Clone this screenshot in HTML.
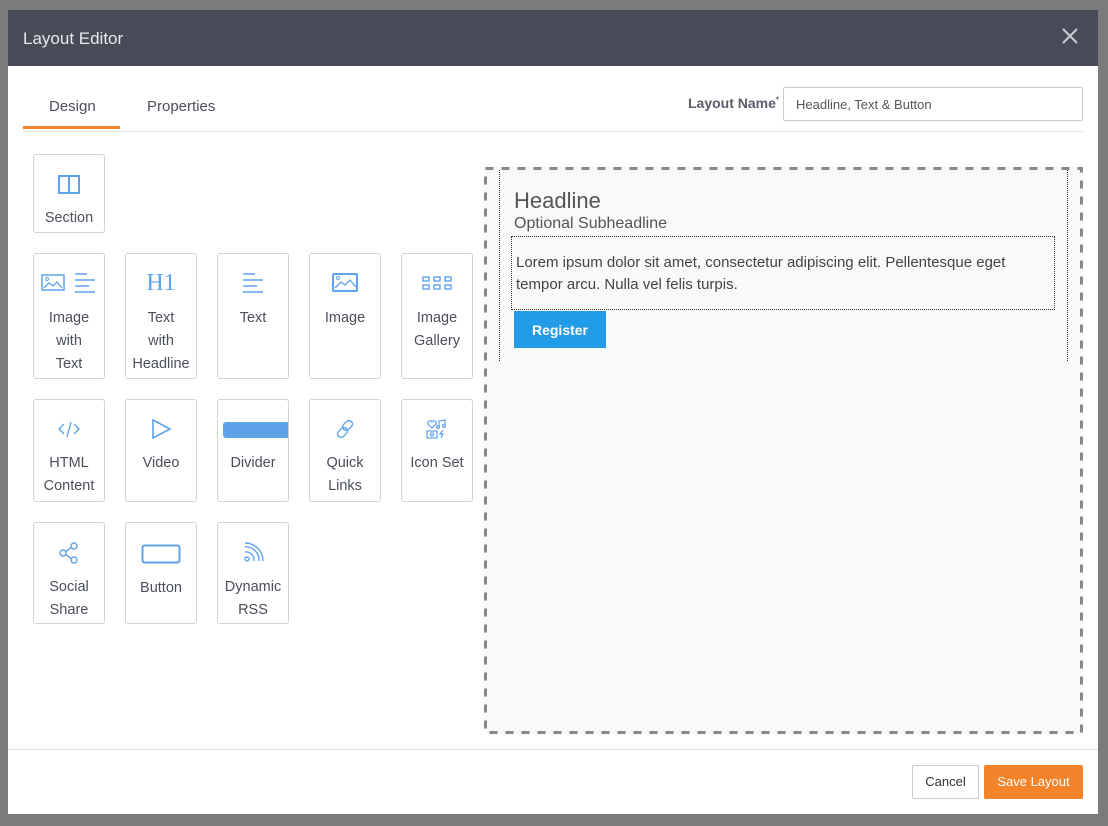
<!DOCTYPE html>
<html><head><style>
*{box-sizing:border-box;margin:0;padding:0}
body{width:1108px;height:826px;background:#7b7b7b;font-family:"Liberation Sans",sans-serif;position:relative;overflow:hidden;color:#444a55}
.modal{position:absolute;left:8px;top:10px;width:1090px;height:804px;background:#fff}
.hdr{position:absolute;left:0;top:0;width:1090px;height:56px;background:#474b57;color:#e8e9ec;font-size:17px;padding:19px 15px}
.x{position:absolute;right:18px;top:16px;width:20px;height:20px}
.abs{position:absolute}
.tile{position:absolute;width:72px;border:1px solid #d3d3d3;border-radius:3px;text-align:center;font-size:14.5px;line-height:23px;color:#4a4f5a;background:#fff}
.tile svg{display:block;margin:0 auto}
.lbl{margin-top:13px}
</style></head><body>
<div class="modal">
 <div class="hdr">Layout Editor
  <svg class="x" viewBox="0 0 20 20"><path d="M3 3L17 17M17 3L3 17" stroke="#c9ccd2" stroke-width="2"/></svg>
 </div>
 <div class="abs" style="left:41px;top:88px;font-size:15px;color:#4a4f5a">Design</div>
 <div class="abs" style="left:139px;top:88px;font-size:15px;color:#4a4f5a">Properties</div>
 <div class="abs" style="left:15px;top:116px;width:97px;height:3px;background:#f5832a"></div>
 <div class="abs" style="left:15px;top:121px;width:1060px;height:1px;background:#e0e0e0"></div>
 <div class="abs" style="left:680px;top:85px;font-size:14px;font-weight:bold;color:#5a5e68">Layout Name<sup style="font-size:8px">*</sup></div>
 <div class="abs" style="left:775px;top:77px;width:300px;height:34px;border:1px solid #ccc;border-radius:2px;font-size:13px;padding:9px 12px;color:#555">Headline, Text &amp; Button</div>

 <div class="abs" style="left:476px;top:157px;width:599px;height:567px;background:#f9f9f9"></div>
 <svg class="abs" style="left:476px;top:157px" width="599" height="567"><rect x="1.5" y="1.5" width="596" height="564" fill="none" stroke="#888" stroke-width="3" stroke-dasharray="8 8"/></svg>
 <div class="abs" style="left:491px;top:160px;width:569px;height:191px;border-left:1px dotted #333;border-right:1px dotted #333"></div>
 <div class="abs" style="left:506px;top:178px;font-size:22px;color:#555">Headline</div>
 <div class="abs" style="left:506px;top:205px;font-size:16px;color:#555">Optional Subheadline</div>
 <div class="abs" style="left:503px;top:226px;width:544px;height:74px;border:1px dotted #333;padding:15px 4px;font-size:15px;line-height:22px;color:#444;white-space:nowrap">Lorem ipsum dolor sit amet, consectetur adipiscing elit. Pellentesque eget<br>tempor arcu. Nulla vel felis turpis.</div>
 <div class="abs" style="left:506px;top:301px;width:92px;height:37px;background:#229ce8;color:#fff;font-weight:bold;font-size:14px;text-align:center;line-height:39px">Register</div>

 <div class="abs" style="left:0;top:739px;width:1090px;height:1px;background:#e0e0e0"></div>
 <div class="abs" style="left:904px;top:755px;width:67px;height:34px;border:1px solid #ccc;border-radius:2px;font-size:13px;text-align:center;line-height:32px;color:#333">Cancel</div>
 <div class="abs" style="left:976px;top:755px;width:99px;height:34px;background:#f5832a;border-radius:2px;font-size:13px;text-align:center;line-height:34px;color:#fff">Save Layout</div>
</div>

<div class="tile" style="left:33px;top:154px;height:79px;padding-top:18px">
 <svg width="24" height="22" viewBox="0 0 24 22"><rect x="2" y="3" width="20" height="17" fill="none" stroke="#5ea3ea" stroke-width="2"/><path d="M12 3V20" stroke="#5ea3ea" stroke-width="2"/></svg>
 <div style="margin-top:12px">Section</div></div>

<div class="tile" style="left:33px;top:253px;height:126px;padding-top:18px">
 <svg width="56" height="22" viewBox="0 0 56 22"><rect x="1" y="3" width="22" height="15" fill="none" stroke="#5ea3ea" stroke-width="1.5"/><path d="M3 16l5-5 4 3 4-4 5 6" fill="none" stroke="#5ea3ea" stroke-width="1.3"/><circle cx="6" cy="7" r="1.5" fill="none" stroke="#5ea3ea"/><path d="M34 2h12M34 8h20M34 14h14M34 20h20" stroke="#5ea3ea" stroke-width="1.5"/></svg>
 <div class="lbl">Image<br>with<br>Text</div></div>
<div class="tile" style="left:125px;top:253px;height:126px;padding-top:17px">
 <div style="font-family:'Liberation Serif',serif;font-size:24px;color:#5ea3ea;line-height:24px;height:24px">H1</div>
 <div class="lbl" style="margin-top:12px">Text<br>with<br>Headline</div></div>
<div class="tile" style="left:217px;top:253px;height:126px;padding-top:18px">
 <svg width="24" height="22" viewBox="0 0 24 22"><path d="M2 2h12M2 8h20M2 14h14M2 20h20" stroke="#5ea3ea" stroke-width="1.5"/></svg>
 <div class="lbl">Text</div></div>
<div class="tile" style="left:309px;top:253px;height:126px;padding-top:18px">
 <svg width="28" height="22" viewBox="0 0 28 22"><rect x="2" y="2" width="24" height="17" rx="1" fill="none" stroke="#5ea3ea" stroke-width="2"/><path d="M4 16l6-6 4 3 5-5 6 7" fill="none" stroke="#5ea3ea" stroke-width="1.3"/><circle cx="7" cy="6" r="1.5" fill="none" stroke="#5ea3ea"/></svg>
 <div class="lbl">Image</div></div>
<div class="tile" style="left:401px;top:253px;height:126px;padding-top:18px">
 <svg width="32" height="22" viewBox="0 0 32 22"><g fill="none" stroke="#5ea3ea" stroke-width="1.4"><rect x="2" y="5" width="6" height="4"/><rect x="13" y="5" width="6" height="4"/><rect x="24" y="5" width="6" height="4"/><rect x="2" y="13" width="6" height="4"/><rect x="13" y="13" width="6" height="4"/><rect x="24" y="13" width="6" height="4"/></g></svg>
 <div class="lbl">Image<br>Gallery</div></div>

<div class="tile" style="left:33px;top:399px;height:103px;padding-top:19px">
 <svg width="24" height="20" viewBox="0 0 24 20"><path d="M7 5l-5 5 5 5M17 5l5 5-5 5M14 3l-4 15" fill="none" stroke="#5ea3ea" stroke-width="1.4"/></svg>
 <div class="lbl">HTML<br>Content</div></div>
<div class="tile" style="left:125px;top:399px;height:103px;padding-top:19px">
 <svg width="24" height="20" viewBox="0 0 24 20"><path d="M4 1L21 10L4 19Z" fill="none" stroke="#5ea3ea" stroke-width="1.6"/></svg>
 <div class="lbl">Video</div></div>
<div class="tile" style="left:217px;top:399px;height:103px;padding-top:22px;overflow:hidden">
 <div style="margin-left:5px;width:70px;height:16px;background:#5ea3ea;border-radius:3px"></div>
 <div style="margin-top:14px">Divider</div></div>
<div class="tile" style="left:309px;top:399px;height:103px;padding-top:19px">
 <svg width="24" height="20" viewBox="0 0 24 20"><g fill="none" stroke="#5ea3ea" stroke-width="1.4"><rect x="11" y="1" width="7" height="11" rx="3.5" transform="rotate(45 14.5 6.5)"/><rect x="6" y="8" width="7" height="11" rx="3.5" transform="rotate(45 9.5 13.5)"/></g></svg>
 <div class="lbl">Quick<br>Links</div></div>
<div class="tile" style="left:401px;top:399px;height:103px;padding-top:19px">
 <svg width="24" height="20" viewBox="0 0 24 20"><g fill="none" stroke="#5ea3ea" stroke-width="1.2"><path d="M7 9L3 5a2 2 0 0 1 4-2 2 2 0 0 1 4 2z"/><path d="M14 7V2l6-1v5"/><circle cx="13" cy="8" r="1.4"/><circle cx="19" cy="7" r="1.4"/><rect x="2" y="12" width="10" height="7"/><circle cx="7" cy="15.5" r="1.6"/><path d="M18 11l-3 4h3l-2 4"/></g></svg>
 <div class="lbl">Icon Set</div></div>

<div class="tile" style="left:33px;top:522px;height:102px;padding-top:19px">
 <svg width="24" height="22" viewBox="0 0 24 22"><g fill="none" stroke="#5ea3ea" stroke-width="1.4"><circle cx="17" cy="4" r="3"/><circle cx="6" cy="11" r="3"/><circle cx="17" cy="18" r="3"/><path d="M8.6 9.5l5.8-4M8.6 12.5l5.8 4"/></g></svg>
 <div style="margin-top:12px">Social<br>Share</div></div>
<div class="tile" style="left:125px;top:522px;height:102px;padding-top:21px">
 <svg width="40" height="20" viewBox="0 0 40 20"><rect x="1.5" y="1.5" width="37" height="17" rx="2" fill="none" stroke="#5ea3ea" stroke-width="2"/></svg>
 <div style="margin-top:13px">Button</div></div>
<div class="tile" style="left:217px;top:522px;height:102px;padding-top:19px">
 <svg width="24" height="22" viewBox="0 0 24 22"><g fill="none" stroke="#5ea3ea" stroke-width="1.4"><circle cx="6" cy="17" r="2"/><path d="M4 10a8 8 0 0 1 9 9M4 5a13 13 0 0 1 14 14M4 1a18 18 0 0 1 18 18"/></g></svg>
 <div style="margin-top:12px">Dynamic<br>RSS</div></div>
</body></html>
